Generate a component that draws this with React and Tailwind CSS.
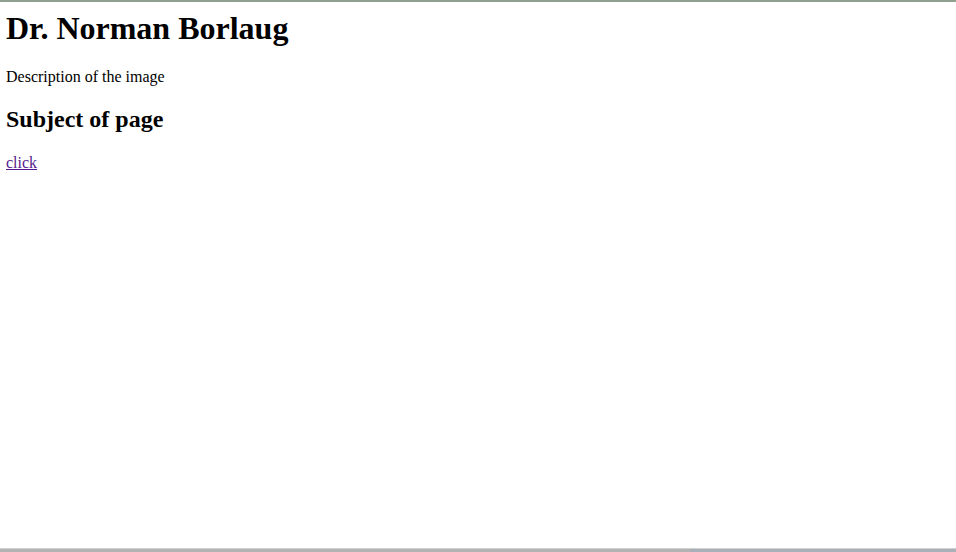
import React from 'react';

const App = () => {
  return (
    <div className="h-[552px] w-[956px] bg-white flex flex-col overflow-hidden text-black font-['Liberation_Serif','Times_New_Roman',serif]">
      {/* top window edge */}
      <div className="h-[2px] bg-[#8fa08f] shrink-0" />

      <main className="px-[6px] flex flex-col">
        <h1 className="mt-[8px] text-[32px] leading-[37px] font-bold">Dr. Norman Borlaug</h1>
        <p className="mt-[21px] text-[16px] leading-[18px]">Description of the image</p>
        <h2 className="mt-[19px] text-[24px] leading-[28px] font-bold">Subject of page</h2>
        <p className="mt-[21px] text-[16px] leading-[18px]">
          <a href="#" className="text-[#551a8b] underline">click</a>
        </p>
      </main>

      {/* edge of the window behind */}
      <div className="mt-auto h-[4px] shrink-0 flex border-t border-[#d0d0d0]">
        <div className="w-[690px] bg-[#b3b3b3]" />
        <div className="flex-1 bg-[#a9b0b8]" />
      </div>
    </div>
  );
};

export default App;
